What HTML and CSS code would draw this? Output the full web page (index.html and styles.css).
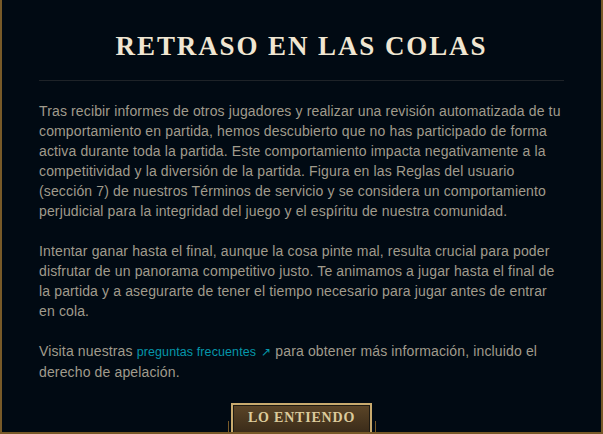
FILE: index.html
```html
<!DOCTYPE html>
<html lang="es">

<head>
    <meta charset="UTF-8">
    <meta name="viewport" content="width=device-width, initial-scale=1.0">
    <title>Retraso en las colas</title>
    <link rel="stylesheet" href="styles.css">
</head>

<body>
    <div class="frame">
        <h1 class="title">RETRASO EN LAS COLAS</h1>
        <hr class="divider">
        <div class="content">
            <p>Tras recibir informes de otros jugadores y realizar una revisión automatizada de tu comportamiento en partida, hemos descubierto que no has participado de forma activa durante toda la partida. Este comportamiento impacta negativamente a la competitividad y la diversión de la partida. Figura en las Reglas del usuario (sección 7) de nuestros Términos de servicio y se considera un comportamiento perjudicial para la integridad del juego y el espíritu de nuestra comunidad.</p>
            <p>Intentar ganar hasta el final, aunque la cosa pinte mal, resulta crucial para poder disfrutar de un panorama competitivo justo. Te animamos a jugar hasta el final de la partida y a asegurarte de tener el tiempo necesario para jugar antes de entrar en&nbsp;cola.</p>
            <p>Visita nuestras <a href="#" class="faq">preguntas frecuentes<span class="arrow">&#8599;</span></a> para obtener más información, incluido el derecho de apelación.</p>
        </div>
        <div class="actions">
            <button class="btn">LO ENTIENDO</button>
        </div>
    </div>
</body>

</html>
```

FILE: styles.css
```css
:root {
    --background: #010a13;
    --gold: #785a28;
    --gold-light: #c8aa6e;
    --text: #a09b8c;
}

html, body {
    margin: 0;
    height: 100%;
    background: var(--background);
}

.frame {
    box-sizing: border-box;
    height: 434px;
    border: 2px solid var(--gold);
    border-top: none;
    padding: 0 34px 0 37px;
    display: flex;
    flex-direction: column;
    overflow: hidden;
}

.title {
    margin: 30px 3px 0 0;
    text-align: center;
    font-family: "Liberation Serif", serif;
    font-weight: bold;
    font-size: 27px;
    line-height: 32px;
    letter-spacing: 1.9px;
    color: #f0e6d2;
}

.divider {
    margin: 18px 3px 0 0;
    border: none;
    height: 1px;
    background: #1e2328;
}

.content {
    margin-top: 20px;
    font-family: "Liberation Sans", sans-serif;
    font-size: 14px;
    line-height: 20px;
    letter-spacing: 0.14px;
    color: var(--text);
}

.content p {
    margin: 0 0 20px;
}

.faq {
    display: inline-block;
    color: #0596aa;
    text-decoration: none;
    font-size: 12.5px;
    line-height: 20px;
    letter-spacing: 0.1px;
}

.arrow {
    display: inline-block;
    margin-left: 5px;
    font-size: 12px;
}

.actions {
    margin: auto 3px 0 0;
    display: flex;
    justify-content: center;
    position: relative;
}

/* small gold ticks either side of the button */
.actions::before,
.actions::after {
    content: "";
    position: absolute;
    bottom: 0;
    width: 1px;
    height: 11px;
    background: var(--gold);
}

.actions::before {
    left: 189px;
}

.actions::after {
    right: 188px;
}

.btn {
    width: 141px;
    height: 30px;
    margin-bottom: -1px;
    border: 2px solid var(--gold-light);
    border-bottom: none;
    box-shadow: inset 0 0 0 1px #1e1a12;
    background: linear-gradient(#5b4527, #3a2b19);
    color: #dccb9c;
    font-family: "Liberation Serif", serif;
    font-weight: bold;
    font-size: 14px;
    letter-spacing: 0.8px;
    padding: 0 0 2px;
    cursor: pointer;
}
```
